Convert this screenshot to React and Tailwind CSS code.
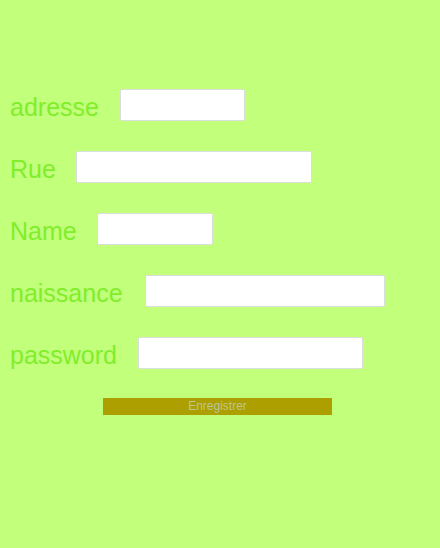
export default function App() {
  const rows = [
    { label: "adresse", width: "w-[125px]", gap: "ml-[21px]" },
    { label: "Rue", width: "w-[236px]", gap: "ml-[20px]" },
    { label: "Name", width: "w-[116px]", gap: "ml-[20px]" },
    { label: "naissance", width: "w-[240px]", gap: "ml-[22px]" },
    { label: "password", width: "w-[225px]", gap: "ml-[21px]" },
  ];
  return (
    <div className="min-h-[548px] w-full bg-[#c2ff7b] pt-[74px] font-['Liberation_Sans',Arial,sans-serif]">
      {rows.map((r) => (
        <div key={r.label} className="flex h-[62px] items-start pl-[10px]">
          <label className="mt-[21px] text-[25px] leading-none text-[#80ee2a]">{r.label}</label>
          <input
            type="text"
            className={`${r.gap} mt-[15px] h-[32px] ${r.width} rounded-[2px] border border-[#dcdcdc] bg-white outline-none`}
          />
        </div>
      ))}
      <div className="mt-[9px] pl-[103px]">
        <button className="h-[17px] w-[229px] bg-[#ad9f00] text-[12px] leading-none text-[#b9c59b]">
          Enregistrer
        </button>
      </div>
    </div>
  );
}
